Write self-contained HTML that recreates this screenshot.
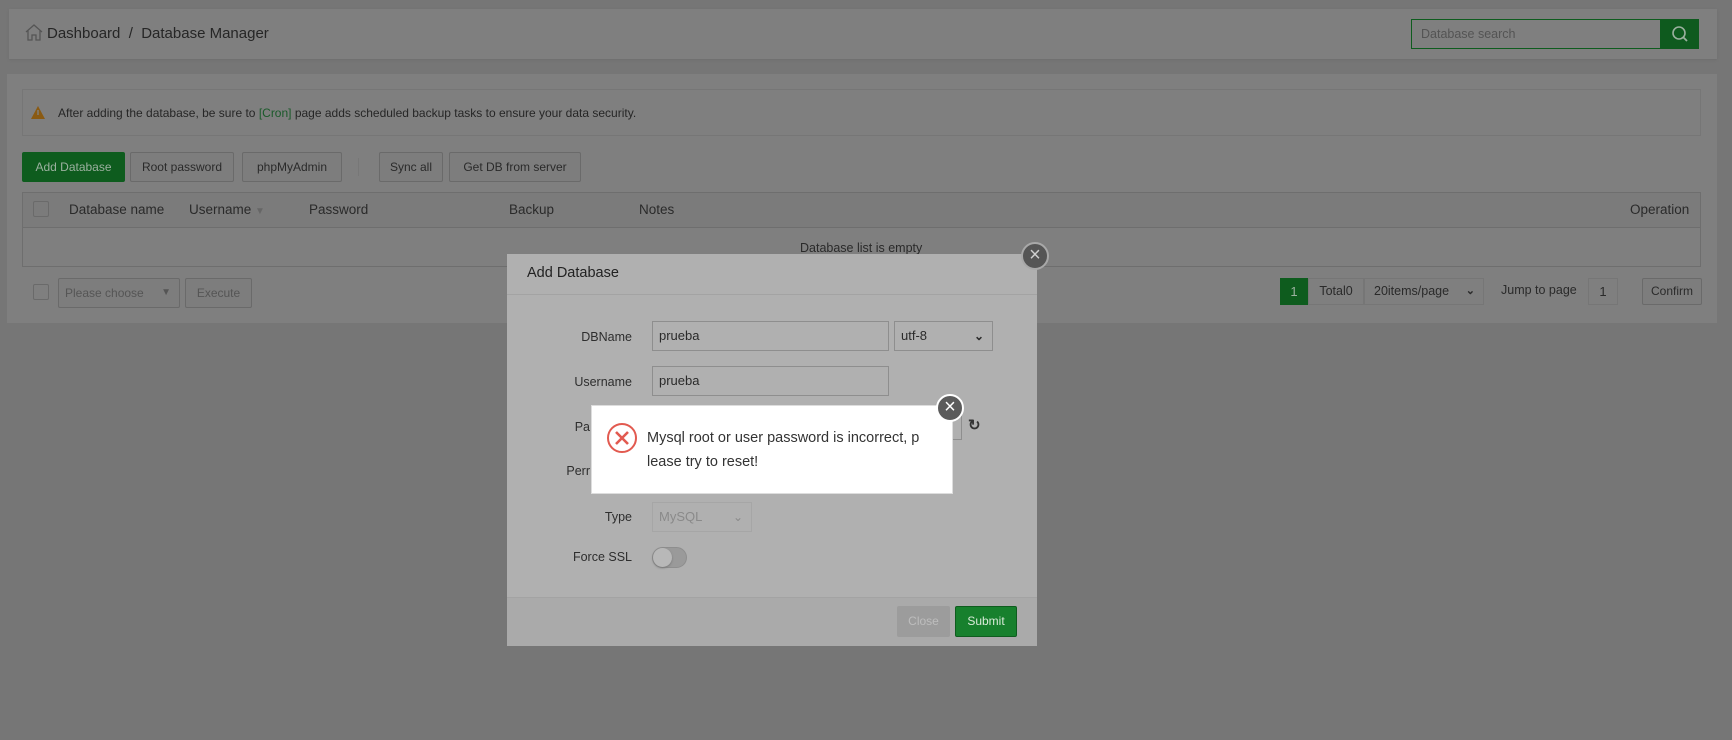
<!DOCTYPE html>
<html><head><meta charset="utf-8"><style>
*{box-sizing:border-box;margin:0;padding:0}
body{width:1732px;height:740px;background:#767676;font-family:"Liberation Sans",sans-serif;position:relative;overflow:hidden;color:#2a2a2a;font-size:13px}
.a{position:absolute;white-space:nowrap}
.btn{position:absolute;white-space:nowrap;border:1px solid #6a6a6a;background:#7d7d7d;border-radius:2px;height:30px;line-height:28px;text-align:center;font-size:12px;color:#2a2a2a}
.lbl{position:absolute;width:130px;left:502px;text-align:right;font-size:12.5px;color:#2e2e2e}
.inp{position:absolute;border:1px solid #8e8e8e;background:#b0b0b0;height:30px;line-height:28px;padding-left:6px;font-size:13px;color:#2a2a2a}
.th{position:absolute;top:202px;font-size:13.5px;color:#2a2a2a}
</style></head><body>
<div class="a" style="left:9px;top:9px;width:1708px;height:50px;background:#7f7f7f;box-shadow:0 1px 2px #6e6e6e"></div>
<svg class="a" style="left:24px;top:23px" width="20" height="18" viewBox="0 0 20 18"><path d="M2 9L10 2L18 9M4 7V17H8V12H12V17H16V7" fill="none" stroke="#555" stroke-width="1.3"/></svg>
<div class="a" style="left:47px;top:25px;font-size:15px;color:#262626">Dashboard &nbsp;/&nbsp; Database Manager</div>
<div class="a" style="left:1411px;top:19px;width:250px;height:30px;border:1px solid #0e5c1e;background:#7f7f7f;padding-left:9px;line-height:28px;color:#545454;font-size:12.5px">Database search</div>
<div class="a" style="left:1660px;top:19px;width:39px;height:30px;background:#0e5a1e"></div>
<svg class="a" style="left:1670px;top:24px" width="20" height="20" viewBox="0 0 20 20"><circle cx="9" cy="9" r="6" fill="none" stroke="#9bb09f" stroke-width="1.6"/><path d="M13.5 13.5L17 17" stroke="#9bb09f" stroke-width="1.8"/></svg>

<div class="a" style="left:7px;top:74px;width:1710px;height:249px;background:#7f7f7f"></div>
<div class="a" style="left:22px;top:89px;width:1679px;height:47px;border:1px solid #767676;background:#7f7f7f"></div>
<svg class="a" style="left:31px;top:106px" width="14" height="13" viewBox="0 0 14 13"><path d="M7 0L14 13H0Z" fill="#8a5a12"/><rect x="6.3" y="4" width="1.4" height="5" fill="#7f7f7f"/></svg>
<div class="a" style="left:58px;top:106px;font-size:12px;color:#262626">After adding the database, be sure to <span style="color:#1a5a2a">[Cron]</span> page adds scheduled backup tasks to ensure your data security.</div>

<div class="btn" style="left:22px;top:152px;width:103px;background:#0e5c1e;border-color:#0e5c1e;color:#9bb09f">Add Database</div>
<div class="btn" style="left:130px;top:152px;width:104px">Root password</div>
<div class="btn" style="left:242px;top:152px;width:100px">phpMyAdmin</div>
<div class="a" style="left:358px;top:158px;width:1px;height:18px;background:#777"></div>
<div class="btn" style="left:379px;top:152px;width:64px">Sync all</div>
<div class="btn" style="left:449px;top:152px;width:132px">Get DB from server</div>

<div class="a" style="left:22px;top:192px;width:1679px;height:75px;border:1px solid #6e6e6e"></div>
<div class="a" style="left:23px;top:193px;width:1677px;height:35px;background:#7b7b7b;border-bottom:1px solid #6e6e6e"></div>
<div class="a" style="left:33px;top:201px;width:16px;height:16px;border:1px solid #6a6a6a;border-radius:2px"></div>
<div class="th" style="left:69px">Database name</div>
<div class="th" style="left:189px">Username <span style="color:#666;font-size:10px">▼</span></div>
<div class="th" style="left:309px">Password</div>
<div class="th" style="left:509px">Backup</div>
<div class="th" style="left:639px">Notes</div>
<div class="th" style="left:1630px">Operation</div>
<div class="a" style="top:241px;left:800px;font-size:12.5px;color:#2a2a2a">Database list is empty</div>

<div class="a" style="left:33px;top:284px;width:16px;height:16px;border:1px solid #6a6a6a;border-radius:2px"></div>
<div class="btn" style="left:58px;top:278px;width:122px;text-align:left;padding-left:6px;color:#555">Please choose <span style="position:absolute;right:8px;font-size:10px">▼</span></div>
<div class="btn" style="left:185px;top:278px;width:67px;color:#555">Execute</div>

<div class="a" style="left:1280px;top:278px;width:28px;height:27px;background:#0e5c1e;color:#9bb09f;text-align:center;line-height:27px">1</div>
<div class="a" style="left:1308px;top:278px;width:56px;height:27px;border:1px solid #767676;line-height:25px;text-align:center;font-size:12.5px">Total0</div>
<div class="a" style="left:1364px;top:278px;width:120px;height:27px;border:1px solid #767676;line-height:25px;padding-left:9px;font-size:12.5px">20items/page<span style="position:absolute;right:8px;font-size:11px;font-weight:bold">⌄</span></div>
<div class="a" style="left:1501px;top:283px;font-size:12.5px">Jump to page</div>
<div class="a" style="left:1588px;top:278px;width:30px;height:27px;border:1px solid #767676;text-align:center;line-height:25px">1</div>
<div class="btn" style="left:1642px;top:278px;width:60px;height:27px;line-height:25px">Confirm</div>

<!-- modal -->
<div class="a" style="left:507px;top:254px;width:530px;height:392px;background:#b0b0b0"></div>
<div class="a" style="left:507px;top:254px;width:530px;height:41px;border-bottom:1px solid #a3a3a3"></div>
<div class="a" style="left:527px;top:265px;font-size:14.5px;color:#222">Add Database</div>
<div class="a" style="left:507px;top:597px;width:530px;height:49px;background:#aaaaaa;border-top:1px solid #a3a3a3"></div>
<div class="a" style="left:1021px;top:242px;width:28px;height:28px;border-radius:50%;background:#555;border:2px solid #a8a8a8;color:#cfcfcf;text-align:center;line-height:23px;font-size:20px">×</div>

<div class="lbl" style="top:330px">DBName</div>
<div class="inp" style="left:652px;top:321px;width:237px">prueba</div>
<div class="inp" style="left:894px;top:321px;width:99px">utf-8<span style="position:absolute;right:8px;font-size:12px;font-weight:bold">⌄</span></div>
<div class="lbl" style="top:375px">Username</div>
<div class="inp" style="left:652px;top:366px;width:237px">prueba</div>
<div class="lbl" style="top:420px;left:500px;width:90px;text-align:right">Pa</div>
<div class="inp" style="left:652px;top:410px;width:310px"></div>
<div class="a" style="left:968px;top:416px;font-size:15px;color:#333;font-weight:bold">↻</div>
<div class="lbl" style="top:464px;left:500px;width:90px">Perr</div>
<div class="lbl" style="top:510px">Type</div>
<div class="inp" style="left:652px;top:502px;width:100px;color:#8a8a8a;border-color:#a6a6a6">MySQL<span style="position:absolute;right:8px;font-size:12px">⌄</span></div>
<div class="lbl" style="top:550px">Force SSL</div>
<div class="a" style="left:652px;top:547px;width:35px;height:21px;border-radius:11px;background:#9a9a9a;border:1px solid #8e8e8e"></div>
<div class="a" style="left:653px;top:548px;width:19px;height:19px;border-radius:50%;background:#b8b8b8;box-shadow:0 1px 2px #777"></div>
<div class="btn" style="left:897px;top:606px;width:53px;height:31px;background:#9c9c9c;border-color:#9c9c9c;color:#bdbdbd">Close</div>
<div class="btn" style="left:955px;top:606px;width:62px;height:31px;background:#17802d;border-color:#0e5c1e;color:#d9ead9">Submit</div>

<!-- error -->
<div class="a" style="left:591px;top:405px;width:362px;height:89px;background:#fff;border:1px solid #ddd"></div>
<svg class="a" style="left:606px;top:422px" width="32" height="32" viewBox="0 0 32 32"><circle cx="16" cy="16" r="14" fill="none" stroke="#e25a50" stroke-width="2"/><path d="M10 10L22 22M22 10L10 22" stroke="#e25a50" stroke-width="2.6"/></svg>
<div class="a" style="left:647px;top:426px;font-size:14.5px;line-height:24px;color:#333">Mysql root or user password is incorrect, p<br>lease try to reset!</div>
<div class="a" style="left:936px;top:394px;width:28px;height:28px;border-radius:50%;background:#5b5b5b;border:2px solid #fff;color:#fff;text-align:center;line-height:23px;font-size:20px">×</div>
</body></html>
